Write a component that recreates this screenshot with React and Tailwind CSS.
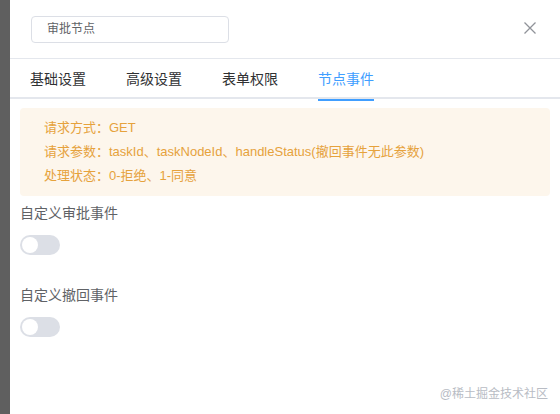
import React from 'react';

const font = { fontFamily: '"Liberation Sans", "Noto Sans CJK SC", sans-serif' };

function Toggle() {
  return (
    <div className="relative w-[40px] h-[20px] rounded-full bg-[#dcdfe6]">
      <span className="absolute left-[2px] top-[2px] w-[16px] h-[16px] rounded-full bg-white" />
    </div>
  );
}

export default function App() {
  const tabs = ['基础设置', '高级设置', '表单权限', '节点事件'];
  const active = 3;
  return (
    <div className="relative flex w-[560px] h-[414px] bg-white overflow-hidden" style={font}>
      <div className="w-[10px] bg-[#5f5f5f] shrink-0" />
      <div className="flex-1 flex flex-col bg-white">
        <div className="h-[59px] border-b border-[#e4e7ed] flex items-center pl-[21px] pr-[24px] justify-between">
          <div className="w-[198px] h-[27px] border border-[#dcdfe6] rounded-[4px] pl-[15px] flex items-center text-[12px] text-[#606266]">
            审批节点
          </div>
          <svg width="12" height="12" viewBox="0 0 12 12" className="mt-[-2px]">
            <path d="M0.5 0.5 L11.5 11.5 M11.5 0.5 L0.5 11.5" stroke="#909399" strokeWidth="1.3" />
          </svg>
        </div>
        <div className="h-[40px] border-b-2 border-[#e4e7ed] flex pl-[20px] gap-[40px]">
          {tabs.map((t, i) => (
            <div
              key={t}
              className={`relative h-[40px] leading-[40px] text-[14px] ${i === active ? 'text-[#409eff]' : 'text-[#303133]'}`}
            >
              {t}
              {i === active && <span className="absolute left-0 right-0 bottom-[-2px] h-[2px] bg-[#409eff]" />}
            </div>
          ))}
        </div>
        <div className="px-[10px]">
          <div className="mt-[9px] bg-[#fdf6ec] rounded-[4px] pl-[24px] py-[8px] text-[13px] text-[#e6a23c] leading-[24px]">
            <div>请求方式：GET</div>
            <div>请求参数：taskId、taskNodeId、handleStatus(撤回事件无此参数)</div>
            <div>处理状态：0-拒绝、1-同意</div>
          </div>
          <div className="mt-[1px] h-[32px] leading-[32px] text-[14px] text-[#606266]">自定义审批事件</div>
          <div className="mt-[6px]"><Toggle /></div>
          <div className="mt-[24px] h-[32px] leading-[32px] text-[14px] text-[#606266]">自定义撤回事件</div>
          <div className="mt-[6px]"><Toggle /></div>
        </div>
      </div>
      <div className="absolute right-[12px] bottom-[11px] text-[12px] text-[#b8bcc4]">@稀土掘金技术社区</div>
    </div>
  );
}
